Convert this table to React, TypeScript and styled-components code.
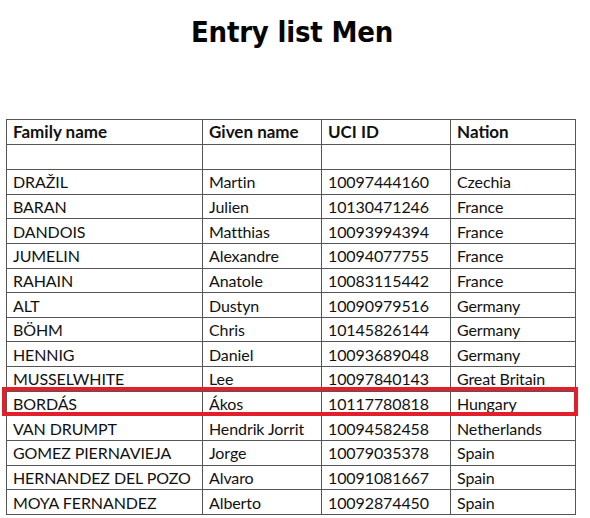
import React from "react";
import styled, { createGlobalStyle } from "styled-components";

const GlobalStyle = createGlobalStyle`
  html, body { margin: 0; padding: 0; background: #fff; }
  body { width: 590px; height: 518px; overflow: hidden; }
`;

const Page = styled.div`
  position: relative;
  width: 590px;
  height: 518px;
  background: #fff;
  padding: 13px 0 0 6px;
  box-sizing: border-box;
`;

const Title = styled.h1`
  margin: 0 6px 0 -6px;
  text-align: center;
  font-family: "DejaVu Sans Condensed", "DejaVu Sans", sans-serif;
  font-weight: bold;
  font-size: 29px;
  line-height: 38px;
  color: #050505;
  letter-spacing: -0.2px;
`;

const Table = styled.table`
  margin-top: 68px;
  border-collapse: collapse;
  table-layout: fixed;
  width: 569px;
  font-family: Lato, "Open Sans", sans-serif;
  font-size: 16px;
  color: #111;
`;

const Col = styled.col<{ $w: number }>`
  width: ${(p) => p.$w}px;
`;

const HeadCell = styled.th`
  border: 1px solid #555;
  text-align: left;
  font-weight: bold;
  font-size: 17px;
  padding: 0 0 0 6px;
  height: 24px;
  line-height: 24px;
  box-sizing: border-box;
  white-space: nowrap;
`;

const Cell = styled.td<{ $empty?: boolean }>`
  border: 1px solid #555;
  padding: 1px 0 0 6px;
  height: ${(p) => (p.$empty ? "25px" : "24.65px")};
  line-height: 22px;
  letter-spacing: -0.1px;
  box-sizing: border-box;
  white-space: nowrap;
  overflow: hidden;
`;

const Highlight = styled.div`
  position: absolute;
  left: 2px;
  top: 387px;
  width: 576px;
  height: 29px;
  border: 4px solid #e2202b;
  box-sizing: border-box;
  pointer-events: none;
`;

const rows: [string, string, string, string][] = [
  ["DRAŽIL", "Martin", "10097444160", "Czechia"],
  ["BARAN", "Julien", "10130471246", "France"],
  ["DANDOIS", "Matthias", "10093994394", "France"],
  ["JUMELIN", "Alexandre", "10094077755", "France"],
  ["RAHAIN", "Anatole", "10083115442", "France"],
  ["ALT", "Dustyn", "10090979516", "Germany"],
  ["BÖHM", "Chris", "10145826144", "Germany"],
  ["HENNIG", "Daniel", "10093689048", "Germany"],
  ["MUSSELWHITE", "Lee", "10097840143", "Great Britain"],
  ["BORDÁS", "Ákos", "10117780818", "Hungary"],
  ["VAN DRUMPT", "Hendrik Jorrit", "10094582458", "Netherlands"],
  ["GOMEZ PIERNAVIEJA", "Jorge", "10079035378", "Spain"],
  ["HERNANDEZ DEL POZO", "Alvaro", "10091081667", "Spain"],
  ["MOYA FERNANDEZ", "Alberto", "10092874450", "Spain"],
];

export default function App() {
  return (
    <>
      <GlobalStyle />
      <Page>
        <Title>Entry list Men</Title>
        <Table>
          <colgroup>
            <Col $w={196} />
            <Col $w={119} />
            <Col $w={129} />
            <Col $w={125} />
          </colgroup>
          <thead>
            <tr>
              <HeadCell>Family name</HeadCell>
              <HeadCell>Given name</HeadCell>
              <HeadCell>UCI ID</HeadCell>
              <HeadCell>Nation</HeadCell>
            </tr>
          </thead>
          <tbody>
            <tr>
              <Cell $empty />
              <Cell $empty />
              <Cell $empty />
              <Cell $empty />
            </tr>
            {rows.map((r) => (
              <tr key={r[2]}>
                {r.map((v, i) => (
                  <Cell key={i}>{v}</Cell>
                ))}
              </tr>
            ))}
          </tbody>
        </Table>
        <Highlight />
      </Page>
    </>
  );
}
